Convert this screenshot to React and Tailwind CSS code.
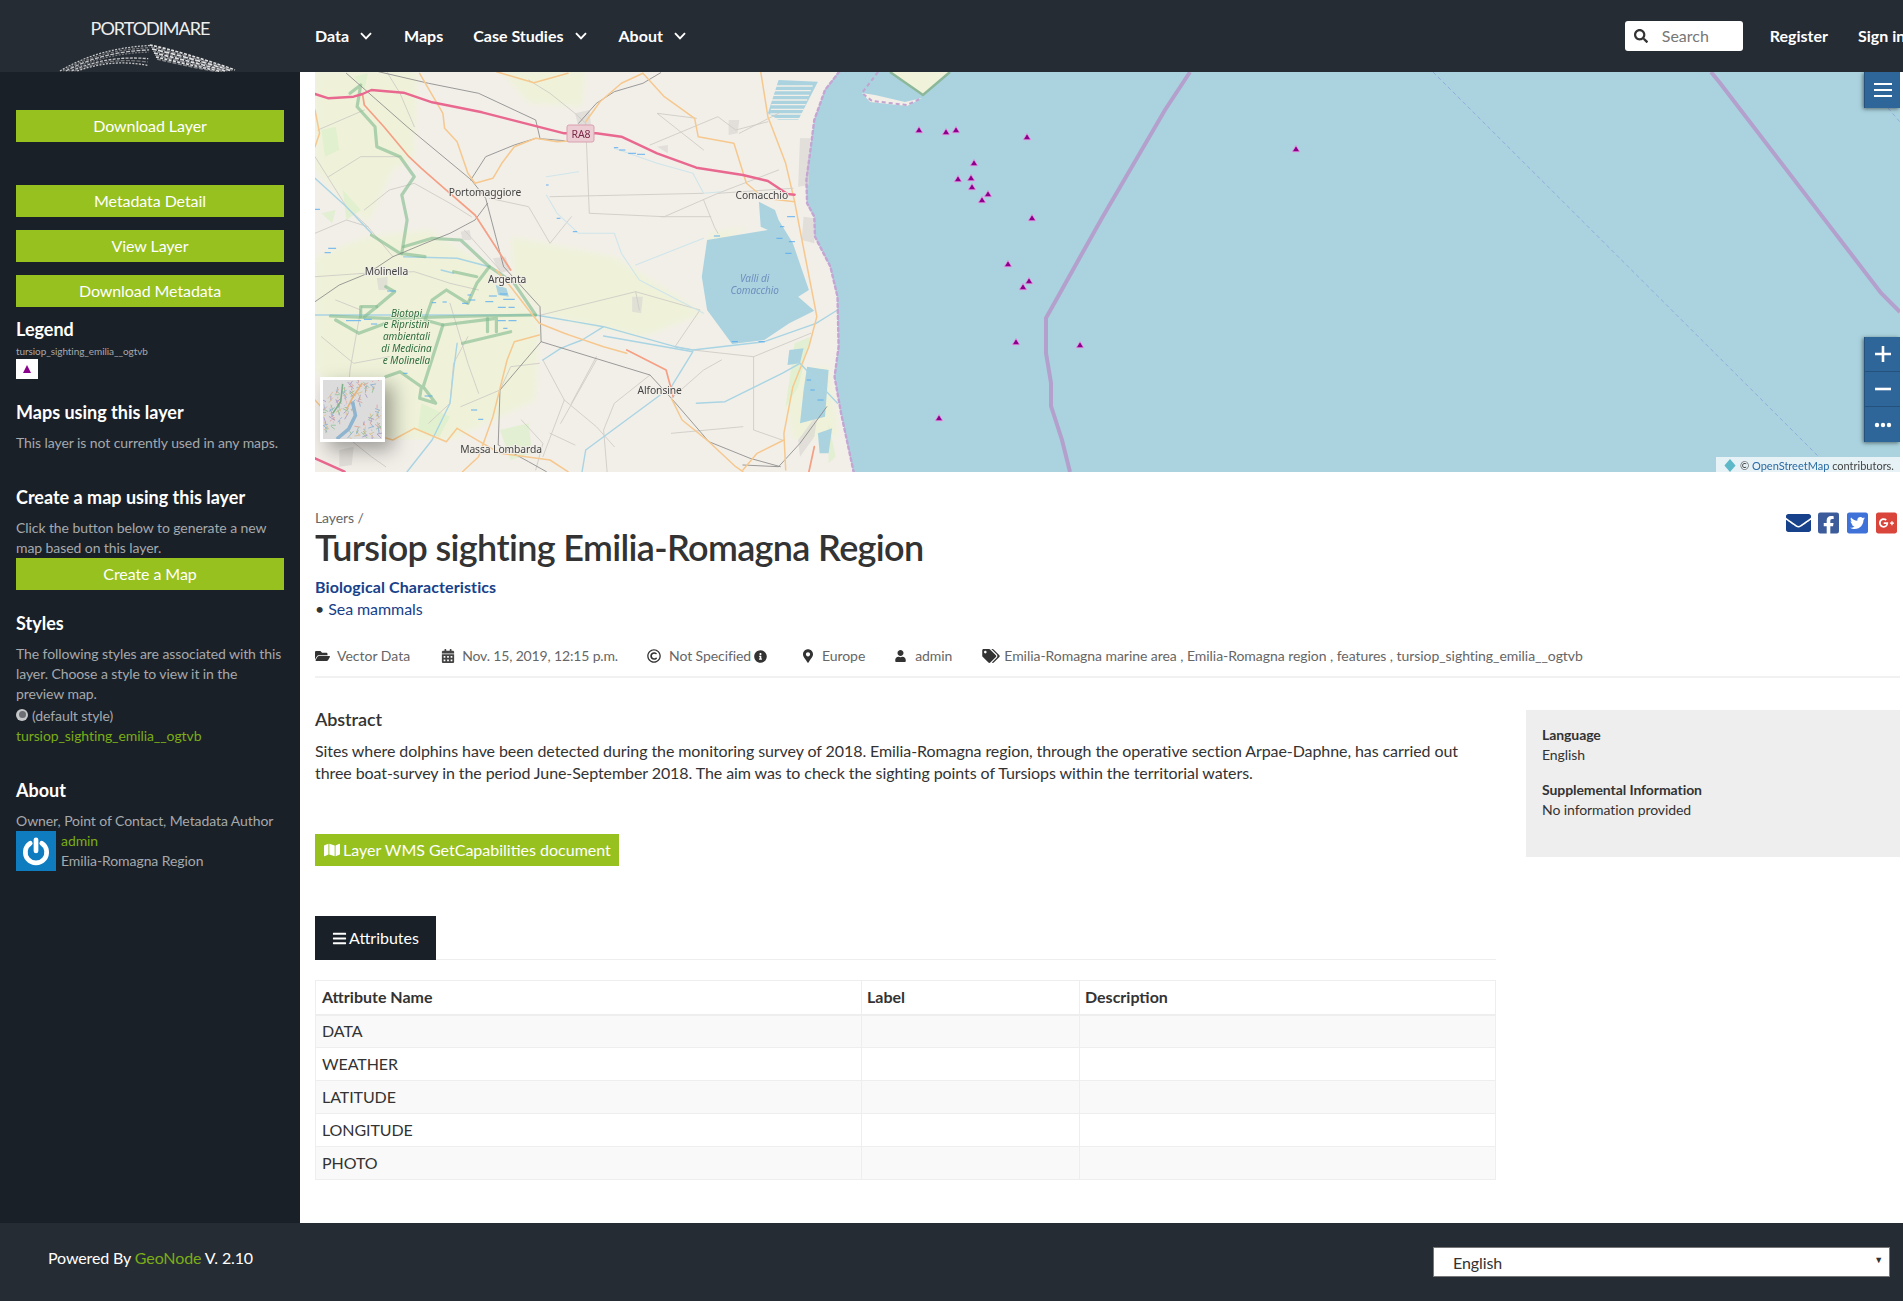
import React from "react";
import {
  FaBars, FaCalendarAlt, FaEnvelope, FaFacebookSquare, FaFolderOpen, FaGooglePlusSquare,
  FaInfoCircle, FaMap, FaMapMarkerAlt, FaRegCopyright, FaSearch, FaTags, FaTwitterSquare, FaUser,
} from "react-icons/fa";

/* Map geometry: written in crop coordinates, converted to page coordinates */
const zx = (x) => 300 + x / 2.8;
const zy = (y) => 70 + y / 3;
const P = (a) => {
  let out = "";
  for (let i = 0; i < a.length; i += 2) out += `${zx(a[i]).toFixed(1)},${zy(a[i + 1]).toFixed(1)} `;
  return out;
};

const farmland = [
  [42,0,330,0,320,260,260,300,190,460,42,300],
  [190,500,360,480,530,590,670,760,660,990,420,1110,240,1110,130,1000,42,900,42,560],
  [590,500,880,560,1130,730,960,800,680,735,600,640],
  [560,0,800,0,790,110,640,100],
  [1360,1000,1400,900,1480,890,1510,1100,1380,1110],
  [1150,490,1260,470,1140,540],
];
const meadow = [
  [60,180,100,170,110,240,70,260],[120,360,170,420,130,450],[150,20,190,10,180,60],[340,1000,420,1040,390,1100,330,1080],
  [560,1080,640,1060,650,1150,590,1170],[1385,820,1430,800,1395,950,1360,1010],[1480,1060,1500,1160,1480,1180],[60,430,100,420,90,460],
];
const towns = [
  [540,565,575,560,590,600,560,610],[215,625,245,620,245,660,220,660],[1400,205,1428,205,1425,345,1395,350],[1410,440,1440,445,1440,520,1405,510],
  [770,130,810,120,815,170,780,170],[1200,150,1230,150,1225,190,1200,195],[1000,230,1030,225,1030,250],[930,680,960,680,955,730,930,725],
  [110,1140,150,1130,145,1185,110,1190],[1395,1110,1450,1030,1440,1100,1400,1160],[450,485,475,480,480,510,455,510],
];
const lakes = [
  [1285,395,1290,470,1310,480,1140,510,1125,620,1140,720,1210,822,1300,810,1370,760,1440,722,1395,680,1425,660,1380,520,1340,450,1330,420],
  [1310,130,1340,30,1450,35,1395,150,1340,150],
  [1370,840,1410,835,1400,880,1365,885],
  [1420,890,1480,900,1470,1040,1400,1060,1410,960],
  [1450,1090,1490,1075,1480,1150,1455,1150],
  [548,645,578,655,585,680,555,675],
];
const saltStripes = [48,62,76,90,104,118,132,146];
const minor = [
  [42,260,130,410,190,470,260,560],[42,490,130,450,190,470],[80,320,170,260,280,260],[180,420,250,360,320,340,420,400,480,440],
  [190,610,320,605,420,640,500,660],[42,620,180,610],[100,690,170,720,140,900,130,1040],[420,700,470,880,500,970],[60,800,150,880,250,860],
  [640,30,700,70,770,130,800,160],[800,160,810,430,1020,440,1170,370,1380,355],[980,225,1170,140,1220,180,1310,155],[1230,190,1340,130],
  [530,385,640,410,700,520,760,440],[700,380,1130,370],[1130,390,1160,470,1170,490],[1170,370,1340,300],[1010,440,1150,440],
  [675,735,940,665,1120,720,1050,830],[940,665,950,720],[680,870,740,990,680,1160],[740,990,830,1070,880,1130],[730,1060,830,870],[760,1000,830,860],
  [860,1205,850,1080,880,1000,980,915],[1050,830,1100,840,1270,860,1430,790],[1270,860,1270,1080,1350,1110],[1040,985,1130,900,1180,870],
  [450,1010,560,960,590,890,670,880],[130,1100,200,1160,240,1190],[360,1060,420,1000,430,880,470,800],[1040,1090,1240,1070],[700,1090,770,1125],
  [1130,240,1000,130,1110,145],[240,0,280,70,320,170],[50,180,180,120],[660,1200,680,1120,620,1050],[460,480,560,600],
];
const rail = [
  [220,5,360,40,500,70,660,150,672,205],
  [130,10,300,170,480,330,520,385,570,590,672,710,675,815,980,915,1040,985,1145,1115,1260,1165,1345,1190],
  [42,695,110,645,190,610,260,560,350,520,420,490,490,450,525,400],
  [675,815,560,960,555,1125,640,1175,690,1205],
  [478,330,520,260,600,225,660,205,740,212],
  [780,160,830,100,880,65,960,40,1010,8],
  [1240,1185,1340,1190,1400,1120,1475,1010],
];
const orange = [
  [1290,5,1310,140,1360,280,1385,395,1400,480,1440,700,1447,740,1425,830,1380,950,1355,1090,1360,1200],
  [960,10,1020,80,1105,145,1115,200,1215,220,1250,340,1300,385,1385,395],
  [550,5,655,38,750,10],
  [335,10,400,130,405,175,440,215,470,310,490,340,540,325,565,280,600,230,660,205,720,215,790,210],
  [960,10,900,40,840,95,800,155],
  [550,600,590,650,640,720,670,760,740,790,850,830,915,850],
  [670,795,600,815,580,870,540,1040,500,1160,455,1205],
  [440,1075,410,1115,320,1075,260,1110,100,1060,42,990],
  [1040,985,1070,1050,1145,1115,1220,1190,1240,1205],
  [1355,1110,1280,1150,1240,1200],
  [42,120,55,190,42,230],
  [440,1075,560,1150,700,1170,750,1205],
];
const trunk = [
  [175,72,180,105,235,170,305,260,340,295,420,370,490,435,590,600],
  [915,840,1025,900,1045,980],
  [1440,1130,1425,1205],
];
const water = [
  [42,735,660,735,850,770,1050,830,1100,840,1300,815,1445,760,1505,720],
  [42,325,130,410,200,490],
  [290,560,440,565,530,590],
  [850,770,790,810,730,835,680,870],
  [850,798,1100,845,1040,950,800,1140,790,1205],
  [1110,1000,1190,995,1350,910,1400,880,1505,1000],
  [440,820,430,900,420,1000,370,1110,300,1205],
  [395,600,430,610],
];
const faintWater = [
  [690,320,780,305],[690,375,720,430,780,490,880,490,900,550,950,630,1130,730],[940,585,1130,505],
  [880,235,1000,280,1100,310,1130,370,1180,365],
];
const green = [
  [140,70,170,45,160,110,210,170,215,230,280,260,320,320,285,375,300,450,285,550],
  [200,495,280,550,350,560],
  [290,530,370,505,450,510,530,590,495,640,470,700,410,660,370,690,350,750,400,765,550,745,550,785],
  [85,738,240,745,500,738,660,735],
  [100,750,165,790,240,760],
  [175,710,215,710,180,740],
  [240,650,265,665,215,710],
  [400,765,345,950,380,1000,335,985,340,950,280,905,240,920],
  [660,735,600,640,530,590],
  [590,785,455,820],
  [430,605,495,620],
  [170,710,170,740],
  [525,745,525,785],
];
const dashes = [
  [42,418,55,418],[80,535,100,535],[70,548,85,548],[245,663,268,663],[130,752,170,752],[180,748,200,748],[200,762,215,762],[370,698,380,698],[400,696,410,696],[455,700,470,700],[470,675,478,675],[475,690,490,690],
  [530,678,550,678],[560,672,580,672],[520,695,540,695],[570,688,600,688],[555,712,575,712],[585,712,600,712],[555,752,575,752],[585,752,605,752],[570,775,580,775],[350,978,370,978],[290,910,300,910],[480,1020,495,1020],[500,1048,512,1048],
  [880,233,890,233],[895,240,910,240],[920,250,940,250],[945,253,965,253],[690,345,695,345],[720,445,728,445],[765,485,775,485],[1160,498,1175,498],
  [1345,470,1355,470],[1365,440,1385,440],[1335,505,1350,505],[1370,515,1385,515],[1360,550,1375,550],[1210,815,1225,815],[1285,815,1300,815],[1420,930,1430,930],[1430,960,1440,960],[1450,990,1465,990],
];
const coast = [[1510,5,1470,60,1440,150,1428,250,1418,330,1420,400,1440,440,1442,500,1485,590,1505,680,1508,830,1497,920,1515,1030,1550,1205]];
const pts = [[919,130],[946,132],[956,130],[1027,137],[974,163],[958,179],[971,178],[972,187],[988,194],[982,200],[1032,218],[1008,264],[1029,281],[1023,287],[1016,342],[1080,345],[939,418],[1296,149]];
const labels = [
  ["Portomaggiore",518,366],["Comacchio",1293,375],["Molinella",242,605],["Argenta",580,627],["Alfonsine",1007,960],["Massa Lombarda",563,1138],
];
const parkLabel = [["Biotopi",298,729],["e Ripristini",298,764],["ambientali",298,800],["di Medicina",298,835],["e Molinella",298,871]];

function Lines({ data, color, width, opacity = 1, dash }) {
  return data.map((a, i) => (
    <polyline key={i} points={P(a)} fill="none" stroke={color} strokeWidth={width} strokeOpacity={opacity} strokeLinejoin="round" strokeLinecap="round" strokeDasharray={dash} />
  ));
}

function MapDrawing() {
  return (
    <svg viewBox="315 72 1585 400" className="block h-full w-full">
      <defs>
        <filter id="soft" x="0" y="0" width="100%" height="100%"><feGaussianBlur stdDeviation="0.45" /></filter>
        <filter id="softer" x="0" y="0" width="100%" height="100%"><feGaussianBlur stdDeviation="3" /></filter>
      </defs>
      <rect x="315" y="72" width="1585" height="400" fill="#aad3df" />
      <polygon points={P([42,0,1510,0,1470,60,1440,150,1428,250,1418,330,1420,400,1440,440,1442,500,1485,590,1505,680,1508,830,1497,920,1515,1030,1550,1210,42,1210])} fill="#f2efe9" />
      <g filter="url(#softer)">
        {farmland.map((a, i) => <polygon key={i} points={P(a)} fill="#eff2d9" />)}
      </g>
      <g filter="url(#soft)">
        {meadow.map((a, i) => <polygon key={i} points={P(a)} fill="#dcefc9" opacity="0.75" />)}
        {towns.map((a, i) => <polygon key={i} points={P(a)} fill="#d8d6d2" opacity="0.65" />)}
        {lakes.map((a, i) => <polygon key={i} points={P(a)} fill="#aad3df" />)}
        {saltStripes.map((y) => <line key={y} x1={zx(1330 - y * 0.1)} x2={zx(1452 - y * 0.35)} y1={zy(y)} y2={zy(y)} stroke="#f2efe9" strokeWidth="1.4" />)}
        <polygon points="878,72 890,72 923,95 907,105 866,98 862,93" fill="#aad3df" />
        <polygon points="862,93 875,95 905,102 922,98 907,106 870,102" fill="#f2efe9" />
        <polygon points="890,72 950,72 923,95" fill="#f0f2da" />
        <polyline points="878,72 862,93 872,101 907,105 922,98" fill="none" stroke="#c3a3cf" strokeWidth="2" strokeDasharray="4 3" />
        <polyline points="890,72 923,95 950,72" fill="none" stroke="#8cb89a" strokeWidth="2.5" />
        <Lines data={minor} color="#cfccc6" width="0.9" />
        <Lines data={faintWater} color="#cfe5ea" width="1.1" />
        <Lines data={water} color="#a9d4e3" width="1.4" />
        <Lines data={green} color="#7fb98c" width="3.2" opacity="0.6" />
        <Lines data={rail} color="#848484" width="0.8" />
        <Lines data={orange} color="#f6c88e" width="1.5" />
        <Lines data={trunk} color="#f59f84" width="1.7" />
        <Lines data={[[42,72,80,85,150,80,175,72,200,60,290,68,370,97,510,127,740,190,830,190,900,200,1000,250,1110,293,1240,315,1310,333,1365,372,1385,374],[42,1165,125,1205]]} color="#e9688f" width="2.4" />
        <Lines data={dashes} color="#52a9f0" width="0.9" />
        <Lines data={coast} color="#c4a5d3" width="2.4" dash="3 3" />
        <polyline points="1190,72 1165,110 1102,218 1046,318 1046,353 1051,383 1051,406 1062,440 1070,472" fill="none" stroke="#b3a0cc" strokeWidth="4" />
        <polyline points="1711,72 1720,83 1881,293 1900,312" fill="none" stroke="#b3a0cc" strokeWidth="4" />
        <line x1="1433" y1="72" x2="1819" y2="457" stroke="#94abdc" strokeWidth="1" strokeDasharray="4 3" />
        <line x1="1888" y1="108" x2="1900" y2="122" stroke="#94abdc" strokeWidth="1" strokeDasharray="4 3" />
      </g>
      <rect x="567" y="125" width="27" height="17" rx="2" fill="#eccdd4" stroke="#d99fb0" />
      <text x="581" y="138" textAnchor="middle" fontSize="10.5" fill="#7b2a48" fontFamily="'Noto Sans', sans-serif">RA8</text>
      {labels.map(([t, x, y]) => (
        <text key={t} x={zx(x)} y={zy(y) + 3.5} textAnchor="middle" fontSize="10.3" fill="#444" stroke="#f2efe9" strokeWidth="2" paintOrder="stroke" fontFamily="'Noto Sans', sans-serif">{t}</text>
      ))}
      {parkLabel.map(([t, x, y]) => (
        <text key={t} x={zx(x)} y={zy(y) + 3.5} textAnchor="middle" fontSize="10" fontStyle="italic" fill="#2f6d40" stroke="#f0f2da" strokeWidth="1.5" paintOrder="stroke" fontFamily="'Noto Sans', sans-serif">{t}</text>
      ))}
      {[["Valli di",625],["Comacchio",660]].map(([t, y]) => (
        <text key={t} x={zx(1273)} y={zy(y) + 3.5} textAnchor="middle" fontSize="10" fontStyle="italic" fill="#6f8fbe" fontFamily="'Noto Sans', sans-serif">{t}</text>
      ))}
      {pts.map(([x, y], i) => (
        <polygon key={i} points={`${x},${y - 3.5} ${x + 3.8},${y + 2.8} ${x - 3.8},${y + 2.8}`} fill="#8b008b" stroke="#ef9ce8" strokeWidth="0.8" />
      ))}
    </svg>
  );
}

function MiniMap() {
  const lines = [];
  const cols = ["#dba49c", "#8fb1d0", "#93c29a", "#d9bf90", "#aa9cc6", "#e8d8d8"];
  for (let i = 0; i < 170; i++) {
    const x = (i * 37) % 61, y = (i * 23) % 59;
    lines.push(<line key={i} x1={x} y1={y} x2={x + ((i * 7) % 13) - 6} y2={y + ((i * 11) % 15) - 7} stroke={cols[i % 6]} strokeWidth="0.9" />);
  }
  return (
    <svg viewBox="0 0 60 60" preserveAspectRatio="none" className="block h-full w-full bg-[#dcdcdc]">
      <defs><filter id="mini" x="0" y="0" width="100%" height="100%"><feGaussianBlur stdDeviation="0.35" /></filter></defs>
      <g filter="url(#mini)">
        {lines}
        <polyline points="14,60 26,50 33,36 30,22" fill="none" stroke="#8eb4cf" strokeWidth="3.6" />
        <polyline points="40,3 30,18 24,30" fill="none" stroke="#e5b27a" strokeWidth="1.6" />
        <polyline points="20,4 18,22 10,34" fill="none" stroke="#7fb08c" strokeWidth="1.6" />
      </g>
    </svg>
  );
}

function Logo() {
  const strands = [];
  for (let i = 0; i < 7; i++) {
    const d = i * 2.2;
    strands.push(
      <path key={`l${i}`} d={`M${60 + d * 1.3} ${71} Q ${98 + d} ${48 + d * 0.8} ${150 - d * 0.2} ${45.5 + d * (i > 3 ? 1.5 : 1)}`} fill="none" stroke={i % 2 ? "#77797c" : "#c4c5c6"} strokeWidth="1.3" strokeDasharray={`${2 + (i % 3)} 1.3`} />
    );
  }
  for (let i = 0; i < 8; i++) {
    const d = i * 2.5;
    strands.push(
      <path key={`r${i}`} d={`M${150 + d * 0.4} ${45 + d * 0.8} Q ${183 + d * 0.2} ${52 + d * 0.8} ${235 - d} ${70 + d * 0.1}`} fill="none" stroke={i % 2 ? "#85878a" : "#e2e2e2"} strokeWidth="1.7" strokeDasharray={`${3 + (i % 3)} 1.4`} />
    );
  }
  return (
    <svg viewBox="50 42 195 30" className="absolute left-[50px] top-[42px] h-[30px] w-[195px]">{strands}</svg>
  );
}

function Chevron() {
  return (
    <svg viewBox="0 0 12 8" className="h-[8px] w-[12px]" fill="none" stroke="#fff" strokeWidth="1.9"><path d="M1 1.2 6 6.4 11 1.2" /></svg>
  );
}

function Hamburger() {
  return (
    <svg viewBox="0 0 18 16" className="h-[16px] w-[18px]" fill="none" stroke="#fff" strokeWidth="2"><path d="M0 2h18M0 8h18M0 14h18" /></svg>
  );
}

function SideBtn({ children, className = "" }) {
  return (
    <div className={`flex h-8 items-center justify-center bg-[#97c11f] text-[16px] text-white ${className}`}>{children}</div>
  );
}

function SideHead({ children, className = "" }) {
  return <h4 className={`text-[18px] font-bold leading-6 tracking-normal text-white ${className}`}>{children}</h4>;
}

const rows = ["DATA", "WEATHER", "LATITUDE", "LONGITUDE", "PHOTO"];

export default function App() {
  return (
    <div className="flex min-h-[1301px] w-[1903px] flex-col overflow-hidden bg-white font-['Lato','Liberation_Sans',sans-serif] text-[14px] leading-5 tracking-[-0.08px] text-[#333]">
      <header className="relative flex h-[72px] shrink-0 items-center bg-[#262c34] text-white">
        <div className="w-[300px] self-start pt-[18px] text-center text-[18px] leading-5 tracking-[-1px] text-[#eee]">PORTODIMARE</div>
        <Logo />
        <nav className="ml-[15px] flex items-center text-[16px] font-bold tracking-normal">
          <span>Data</span><span className="ml-[11px]"><Chevron /></span>
          <span className="ml-[32px]">Maps</span>
          <span className="ml-[30px]">Case Studies</span><span className="ml-[11px]"><Chevron /></span>
          <span className="ml-[32px]">About</span><span className="ml-[11px]"><Chevron /></span>
        </nav>
        <div className="ml-auto flex items-center pr-0 text-[16px] font-bold tracking-normal">
          <div className="flex h-[30px] w-[118px] items-center rounded-[3px] bg-white pl-[9px] text-[16px] font-normal text-[#777]">
            <FaSearch className="h-[14px] w-[14px] text-[#333]" />
            <span className="ml-[14px]">Search</span>
          </div>
          <span className="ml-[27px]">Register</span>
          <span className="ml-[30px] w-[45px] overflow-hidden whitespace-nowrap">Sign in</span>
        </div>
      </header>

      <div className="flex flex-1">
        <aside className="w-[300px] shrink-0 bg-[#1a2027] px-4 pt-[38px] text-[#a5a9ad]">
          <SideBtn>Download Layer</SideBtn>
          <SideBtn className="mt-[43px]">Metadata Detail</SideBtn>
          <SideBtn className="mt-[13px]">View Layer</SideBtn>
          <SideBtn className="mt-[13px]">Download Metadata</SideBtn>
          <SideHead className="mt-[10px]">Legend</SideHead>
          <div className="mt-[3px] text-[10px] leading-[14px]">tursiop_sighting_emilia__ogtvb</div>
          <div className="mt-px flex h-5 w-[22px] items-center justify-center bg-white">
            <svg viewBox="0 0 10 10" className="h-[10px] w-[10px]"><polygon points="5,1 9,9 1,9" fill="#8b008b" /></svg>
          </div>
          <SideHead className="mt-[21px]">Maps using this layer</SideHead>
          <p className="mt-[9px]">This layer is not currently used in any maps.</p>
          <SideHead className="mt-[32px]">Create a map using this layer</SideHead>
          <p className="mt-[9px]">Click the button below to generate a new map based on this layer.</p>
          <SideBtn>Create a Map</SideBtn>
          <SideHead className="mt-[21px]">Styles</SideHead>
          <p className="mt-[9px] whitespace-nowrap">The following styles are associated with this<br />layer. Choose a style to view it in the<br />preview map.</p>
          <div className="mt-[2px] flex h-5 items-center">
            <span className="mb-[3px] flex h-3 w-3 items-center justify-center rounded-full bg-[#c4c6c8]"><span className="h-[7px] w-[7px] rounded-full bg-[#6b6f73]" /></span>
            <span className="ml-[4px]">(default style)</span>
          </div>
          <div className="text-[#7bad17]">tursiop_sighting_emilia__ogtvb</div>
          <SideHead className="mt-[32px]">About</SideHead>
          <p className="mt-[9px]">Owner, Point of Contact, Metadata Author</p>
          <div className="flex">
            <div className="flex h-10 w-10 items-center justify-center bg-[#0f7cc0]">
              <svg viewBox="0 0 30 30" className="h-[32px] w-[32px]" fill="none" stroke="#fff" strokeWidth="4.4" strokeLinecap="round">
                <path d="M9.6 7.8a10 10 0 1 0 10.8 0" />
                <path d="M15 4.5V15" />
              </svg>
            </div>
            <div className="ml-[5px]">
              <div className="text-[#7bad17]">admin</div>
              <div>Emilia-Romagna Region</div>
            </div>
          </div>
        </aside>

        <main className="min-w-0 flex-1 pl-[15px] pr-[3px]">
          <section className="relative h-[400px] overflow-hidden">
            <MapDrawing />
            <div className="absolute bottom-[30px] left-[5px] h-[65px] w-[65px] border-[3px] border-white shadow-[8px_8px_18px_rgba(0,0,0,0.35)]">
              <MiniMap />
            </div>
            <div className="absolute right-0 top-0 flex h-9 w-[36px] items-center justify-center border-l border-[#24527c] bg-[#2e6699] text-white shadow-[-1px_1px_4px_rgba(0,0,0,0.5)]">
              <Hamburger />
            </div>
            <div className="absolute right-0 top-[265px] flex w-[36px] flex-col border-l border-[#24527c] bg-[#2e6699] text-white shadow-[-1px_1px_4px_rgba(0,0,0,0.5)]">
              <div className="flex h-[35px] items-center justify-center border-b border-[#24527c]"><svg viewBox="0 0 18 18" className="h-[18px] w-[18px]" fill="none" stroke="#fff" strokeWidth="2.6"><path d="M9 1v16M1 9h16" /></svg></div>
              <div className="flex h-[35px] items-center justify-center border-b border-[#24527c]"><svg viewBox="0 0 18 18" className="h-[18px] w-[18px]" fill="none" stroke="#fff" strokeWidth="2.6"><path d="M1 9h16" /></svg></div>
              <div className="flex h-[35px] items-center justify-center"><svg viewBox="0 0 18 6" className="h-[6px] w-[18px]" fill="#fff"><circle cx="3" cy="3" r="2.2" /><circle cx="9" cy="3" r="2.2" /><circle cx="15" cy="3" r="2.2" /></svg></div>
            </div>
            <div className="absolute bottom-0 right-0 flex h-[15px] w-[184px] items-center bg-white/70 pl-[8px] pt-[2px] text-[11px] tracking-normal text-[#444]">
              <svg viewBox="0 0 12 14" className="h-[13px] w-[12px]"><path d="M6 0 12 7 6 14 0 7Z" fill="#5db8c8" /></svg>
              <span className="ml-[4px] whitespace-nowrap">© <span className="text-[#2b6aa3]">OpenStreetMap</span> contributors.</span>
            </div>
          </section>

          <div className="mt-[36px] flex items-start justify-between">
            <div>
              <div className="text-[14px] text-[#666]">Layers /</div>
              <h1 className="-mt-[1px] pb-[2px] text-[36px] font-semibold leading-10 tracking-[-0.65px] text-[#333]">Tursiop sighting Emilia-Romagna Region</h1>
              <div className="mt-[7px] text-[16px] font-bold leading-[22px] tracking-[0.1px] text-[#17418a]">Biological Characteristics</div>
              <div className="text-[16px] leading-[22px] text-[#17418a]"><span className="text-[#333]">•</span> Sea mammals</div>
            </div>
            <div className="mt-[3px] flex items-center pr-[3px]">
              <FaEnvelope preserveAspectRatio="none" className="h-[24px] w-[25px] text-[#17418a]" />
              <FaFacebookSquare className="ml-[7px] h-[24px] w-[21px] text-[#3b5b9a]" />
              <FaTwitterSquare className="ml-[8px] h-[24px] w-[21px] text-[#3f72d8]" />
              <FaGooglePlusSquare className="ml-[8px] h-[24px] w-[21px] text-[#d9453a]" />
            </div>
          </div>

          <div className="mt-[26px] flex items-center border-b-2 border-[#f1f1f1] pb-[10px] text-[#666]">
            <FaFolderOpen className="h-[14px] w-[15px] text-[#333]" /><span className="ml-[7px] tracking-normal">Vector Data</span>
            <FaCalendarAlt className="ml-[31px] h-[14px] w-[14px] text-[#444]" /><span className="ml-[7px] tracking-[-0.15px]">Nov. 15, 2019, 12:15 p.m.</span>
            <FaRegCopyright className="ml-[29px] h-[14px] w-[14px] text-[#333]" /><span className="ml-[8px]">Not Specified</span>
            <FaInfoCircle className="ml-[3px] h-[13px] w-[13px] text-[#333]" />
            <FaMapMarkerAlt className="ml-[36px] h-[14px] w-[10px] text-[#333]" /><span className="ml-[9px]">Europe</span>
            <FaUser className="ml-[30px] h-[12px] w-[11px] text-[#333]" /><span className="ml-[9px]">admin</span>
            <FaTags className="ml-[30px] h-[14px] w-[18px] text-[#333]" /><span className="ml-[4px] tracking-[-0.05px]">Emilia-Romagna marine area , Emilia-Romagna region , features , tursiop_sighting_emilia__ogtvb</span>
          </div>

          <div className="mt-[29px] flex items-start">
            <div className="w-[1181px] shrink-0">
              <h2 className="text-[18px] font-semibold leading-6">Abstract</h2>
              <p className="mt-[9px] pr-[30px] text-[16px] leading-[22px]">Sites where dolphins have been detected during the monitoring survey of 2018. Emilia-Romagna region, through the operative section Arpae-Daphne, has carried out three boat-survey in the period June-September 2018. The aim was to check the sighting points of Tursiops within the territorial waters.</p>
              <div className="mt-[50px] flex h-8 w-[304px] items-center bg-[#97c11f] pl-[9px] text-[16px] tracking-normal text-white">
                <FaMap className="h-[16px] w-[16px]" /><span className="ml-[3px] whitespace-nowrap">Layer WMS GetCapabilities document</span>
              </div>
              <div className="mt-[50px] border-b border-[#eee]">
                <div className="-mb-px flex h-[44px] w-[121px] items-center justify-center bg-[#1a2027] text-[16px] tracking-normal text-white">
                  <FaBars className="h-[15px] w-[15px]" /><span className="ml-[2px]">Attributes</span>
                </div>
              </div>
              <table className="mt-[20px] w-full table-fixed border-collapse border border-[#eee] text-[16px]">
                <thead>
                  <tr className="h-[34px] border-b-2 border-[#eee] text-left tracking-normal">
                    <th className="w-[546px] border-r border-[#eee] pl-[6px] font-bold">Attribute Name</th>
                    <th className="w-[218px] border-r border-[#eee] pl-[5px] font-bold">Label</th>
                    <th className="pl-[5px] font-bold">Description</th>
                  </tr>
                </thead>
                <tbody>
                  {rows.map((r, i) => (
                    <tr key={r} className={`h-[33px] border-b border-[#eee] ${i % 2 === 0 ? "bg-[#f9f9f9]" : "bg-white"}`}>
                      <td className="border-r border-[#eee] pl-[6px]">{r}</td>
                      <td className="border-r border-[#eee]" />
                      <td />
                    </tr>
                  ))}
                </tbody>
              </table>
            </div>
            <aside className="ml-[30px] mt-[3px] h-[147px] flex-1 bg-[#eee] pl-[16px] pt-[15px]">
              <div className="font-bold">Language</div>
              <div>English</div>
              <div className="mt-[15px] font-bold">Supplemental Information</div>
              <div>No information provided</div>
            </aside>
          </div>
        </main>
      </div>

      <footer className="flex h-[78px] shrink-0 items-center bg-[#262c34] pl-[48px] pr-[13px] text-white">
        <div className="-mt-[8px] text-[16px] tracking-[-0.12px]">Powered By <span className="text-[#7bad17]">GeoNode</span> V. 2.10</div>
        <div className="relative ml-auto h-[30px] w-[457px]">
          <select className="h-full w-full appearance-none border border-[#777] bg-white pl-[19px] pt-[2px] text-[16px] text-[#333]" defaultValue="en">
            <option value="en">English</option>
          </select>
          <span className="pointer-events-none absolute right-[7px] top-[7px] text-[9px] leading-3 text-[#333]">▼</span>
        </div>
      </footer>
    </div>
  );
}
